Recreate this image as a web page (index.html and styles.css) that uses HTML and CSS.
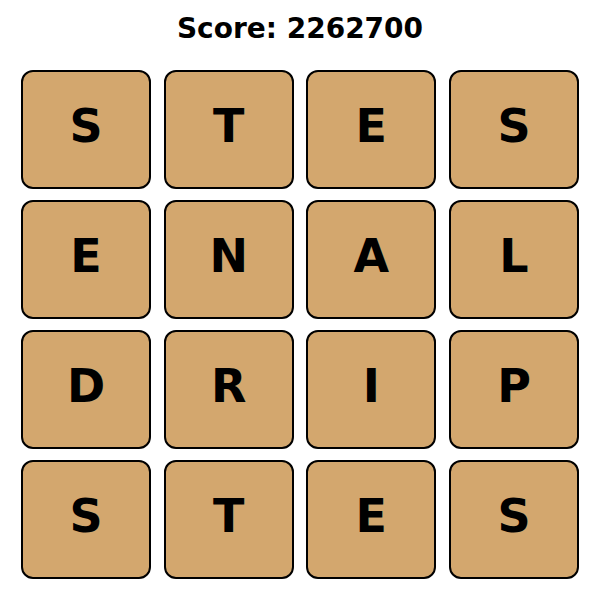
FILE: index.html
```html
<!DOCTYPE html>
<html>
<head>
<meta charset="utf-8">
<link rel="stylesheet" href="styles.css">
</head>
<body>
<div class="page">
  <h1 class="score">Score: 2262700</h1>
  <div class="board">
    <div class="tile">S</div><div class="tile">T</div><div class="tile">E</div><div class="tile">S</div>
    <div class="tile">E</div><div class="tile">N</div><div class="tile">A</div><div class="tile">L</div>
    <div class="tile">D</div><div class="tile">R</div><div class="tile">I</div><div class="tile">P</div>
    <div class="tile">S</div><div class="tile">T</div><div class="tile">E</div><div class="tile">S</div>
  </div>
</div>
</body>
</html>
```

FILE: styles.css
```css
html, body {
  margin: 0;
  padding: 0;
  background: #ffffff;
}
.page {
  width: 600px;
  height: 600px;
  font-family: "DejaVu Sans", sans-serif;
  color: #000;
}
.score {
  margin: 0;
  padding-top: 12px;
  font-size: 28px;
  font-weight: bold;
  text-align: center;
  line-height: normal;
  height: 70px;
  box-sizing: border-box;
}
.board {
  margin-left: 21px;
  width: 558px;
  display: grid;
  grid-template-columns: repeat(4, 1fr);
  grid-template-rows: repeat(4, 119px);
  column-gap: 12.67px;
  row-gap: 11px;
}
.tile {
  box-sizing: border-box;
  background: #d3a76e;
  border: 2.5px solid #000;
  border-radius: 12px;
  display: flex;
  align-items: center;
  justify-content: center;
  font-size: 46px;
  font-weight: bold;
  padding-bottom: 7px;
}
```
